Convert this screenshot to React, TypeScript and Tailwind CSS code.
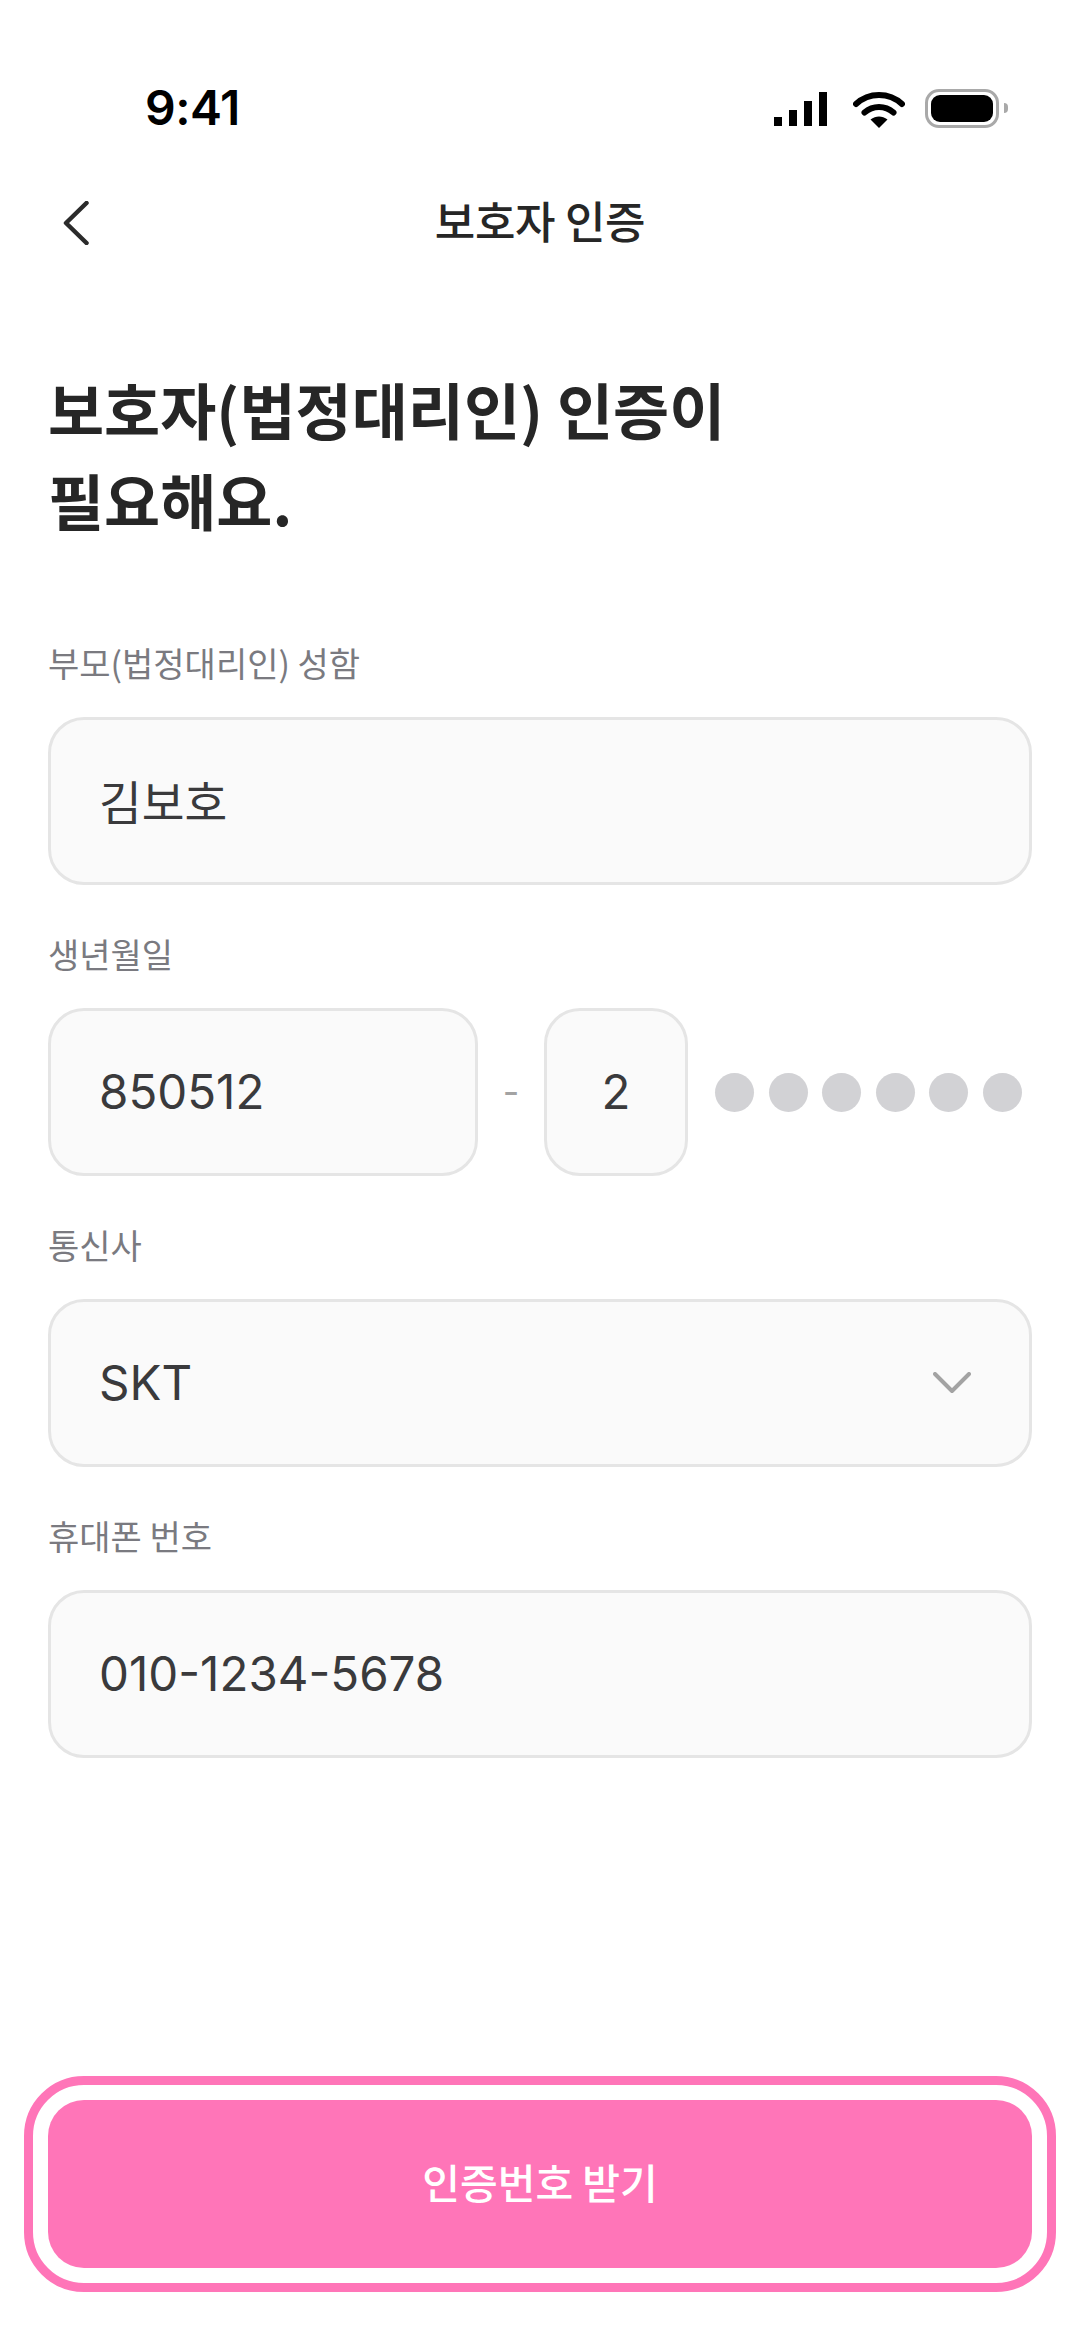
function StatusBar() {
  return (
    <div className="flex h-[144px] items-start justify-between pl-[145px] pr-[72px] pt-[84px]">
      <span className="font-['Inter',sans-serif] text-[48px] font-semibold leading-[48px] tracking-[-0.5px] text-black">9:41</span>
      <div className="flex items-center">
        <svg width="53" height="34" viewBox="0 0 53 34" fill="#000" className="mt-[6px]">
          <rect x="0" y="25" width="8" height="9" />
          <rect x="15" y="18" width="8" height="16" />
          <rect x="30" y="9" width="8" height="25" />
          <rect x="45" y="0" width="8" height="34" />
        </svg>
        <svg width="52" height="37" viewBox="0 0 52 37" className="ml-[26px] mt-[7px]">
          <path d="M3 13 C16 1 36 1 49 13" fill="none" stroke="#000" strokeWidth="6" strokeLinecap="round" />
          <path d="M11.5 21.5 C20 14 32 14 40.5 21.5" fill="none" stroke="#000" strokeWidth="6" strokeLinecap="round" />
          <path d="M17.5 28.5 C23 24.5 29 24.5 34.5 28.5 L26 37 Z" fill="#000" />
        </svg>
        <div className="ml-[20px] mt-[4px] flex h-[39px] w-[74px] items-center justify-center rounded-[14px] border-[3px] border-[#a9a9a9]">
          <div className="h-[27px] w-[62px] rounded-[9px] bg-black" />
        </div>
        <div className="ml-[5px] mt-[4px] h-[10px] w-[4px] rounded-r-full bg-[#a9a9a9]" />
      </div>
    </div>
  )
}

function Label({ children }: { children: React.ReactNode }) {
  return <div className="h-[123px] pt-[45px] text-[34px] leading-[48px] text-[#7a7a80]">{children}</div>
}

function Box({ className, children }: { className?: string; children: React.ReactNode }) {
  return (
    <div className={`flex h-[168px] items-center rounded-[36px] border-[3px] border-[#e5e5e5] bg-[#fafafa] leading-none text-[#3a3a3c] ${className ?? ''}`}>
      {children}
    </div>
  )
}

const numberText = "font-['Inter',sans-serif] text-[47.5px]"

export default function App() {
  const dots = [0, 1, 2, 3, 4, 5]

  return (
    <div className="flex h-[2340px] w-[1080px] flex-col bg-white font-['Noto_Sans_CJK_KR',sans-serif]">
      <StatusBar />

      {/* Nav */}
      <div className="relative flex h-[160px] items-center justify-center pb-[8px]">
        <svg width="26" height="44" viewBox="0 0 26 44" className="absolute left-[63px] top-[57px]">
          <path d="M23.5 2 L3 22 L23.5 42" fill="none" stroke="#2b2b2b" strokeWidth="4.5" strokeLinecap="round" strokeLinejoin="round" />
        </svg>
        <span className="text-[44px] font-medium tracking-[-0.3px] text-[#262626]">보호자 인증</span>
      </div>

      <div className="px-[48px]">
        <h1 className="pt-[59px] text-[61px] font-bold leading-[91px] text-[#262626]">
          보호자(법정대리인) 인증이
          <br />
          필요해요.
        </h1>

        <div className="mt-[49px]">
          <Label>부모(법정대리인) 성함</Label>
          <Box className="px-[48px] pb-[2px] text-[46.5px]">김보호</Box>

          <Label>생년월일</Label>
          <div className="flex items-center">
            <Box className={`w-[430px] px-[48px] ${numberText}`}>850512</Box>
            <span className="w-[66px] text-center font-['Inter',sans-serif] text-[36px] text-[#a3a3a3]">-</span>
            <Box className={`w-[144px] justify-center ${numberText}`}>2</Box>
            <div className="ml-[27px] flex gap-[14.5px]">
              {dots.map(d => (
                <div key={d} className="h-[39px] w-[39px] rounded-full bg-[#d2d2d5]" />
              ))}
            </div>
          </div>

          <Label>통신사</Label>
          <Box className={`justify-between pl-[48px] pr-[58px] ${numberText}`}>
            SKT
            <svg width="38" height="22" viewBox="0 0 38 22">
              <path d="M2 2 L19 19 L36 2" fill="none" stroke="#a3a3a3" strokeWidth="4" strokeLinecap="round" strokeLinejoin="round" />
            </svg>
          </Box>

          <Label>휴대폰 번호</Label>
          <Box className={`px-[48px] ${numberText}`}>010-1234-5678</Box>
        </div>
      </div>

      <div className="mt-auto px-[24px] pb-[48px]">
        <div className="rounded-[60px] border-[9px] border-[#ff75b8] p-[15px]">
          <div className="flex h-[168px] items-center justify-center rounded-[36px] bg-[#ff75b8] pb-[4px] text-[41px] font-medium text-white">
            인증번호 받기
          </div>
        </div>
      </div>
    </div>
  )
}
